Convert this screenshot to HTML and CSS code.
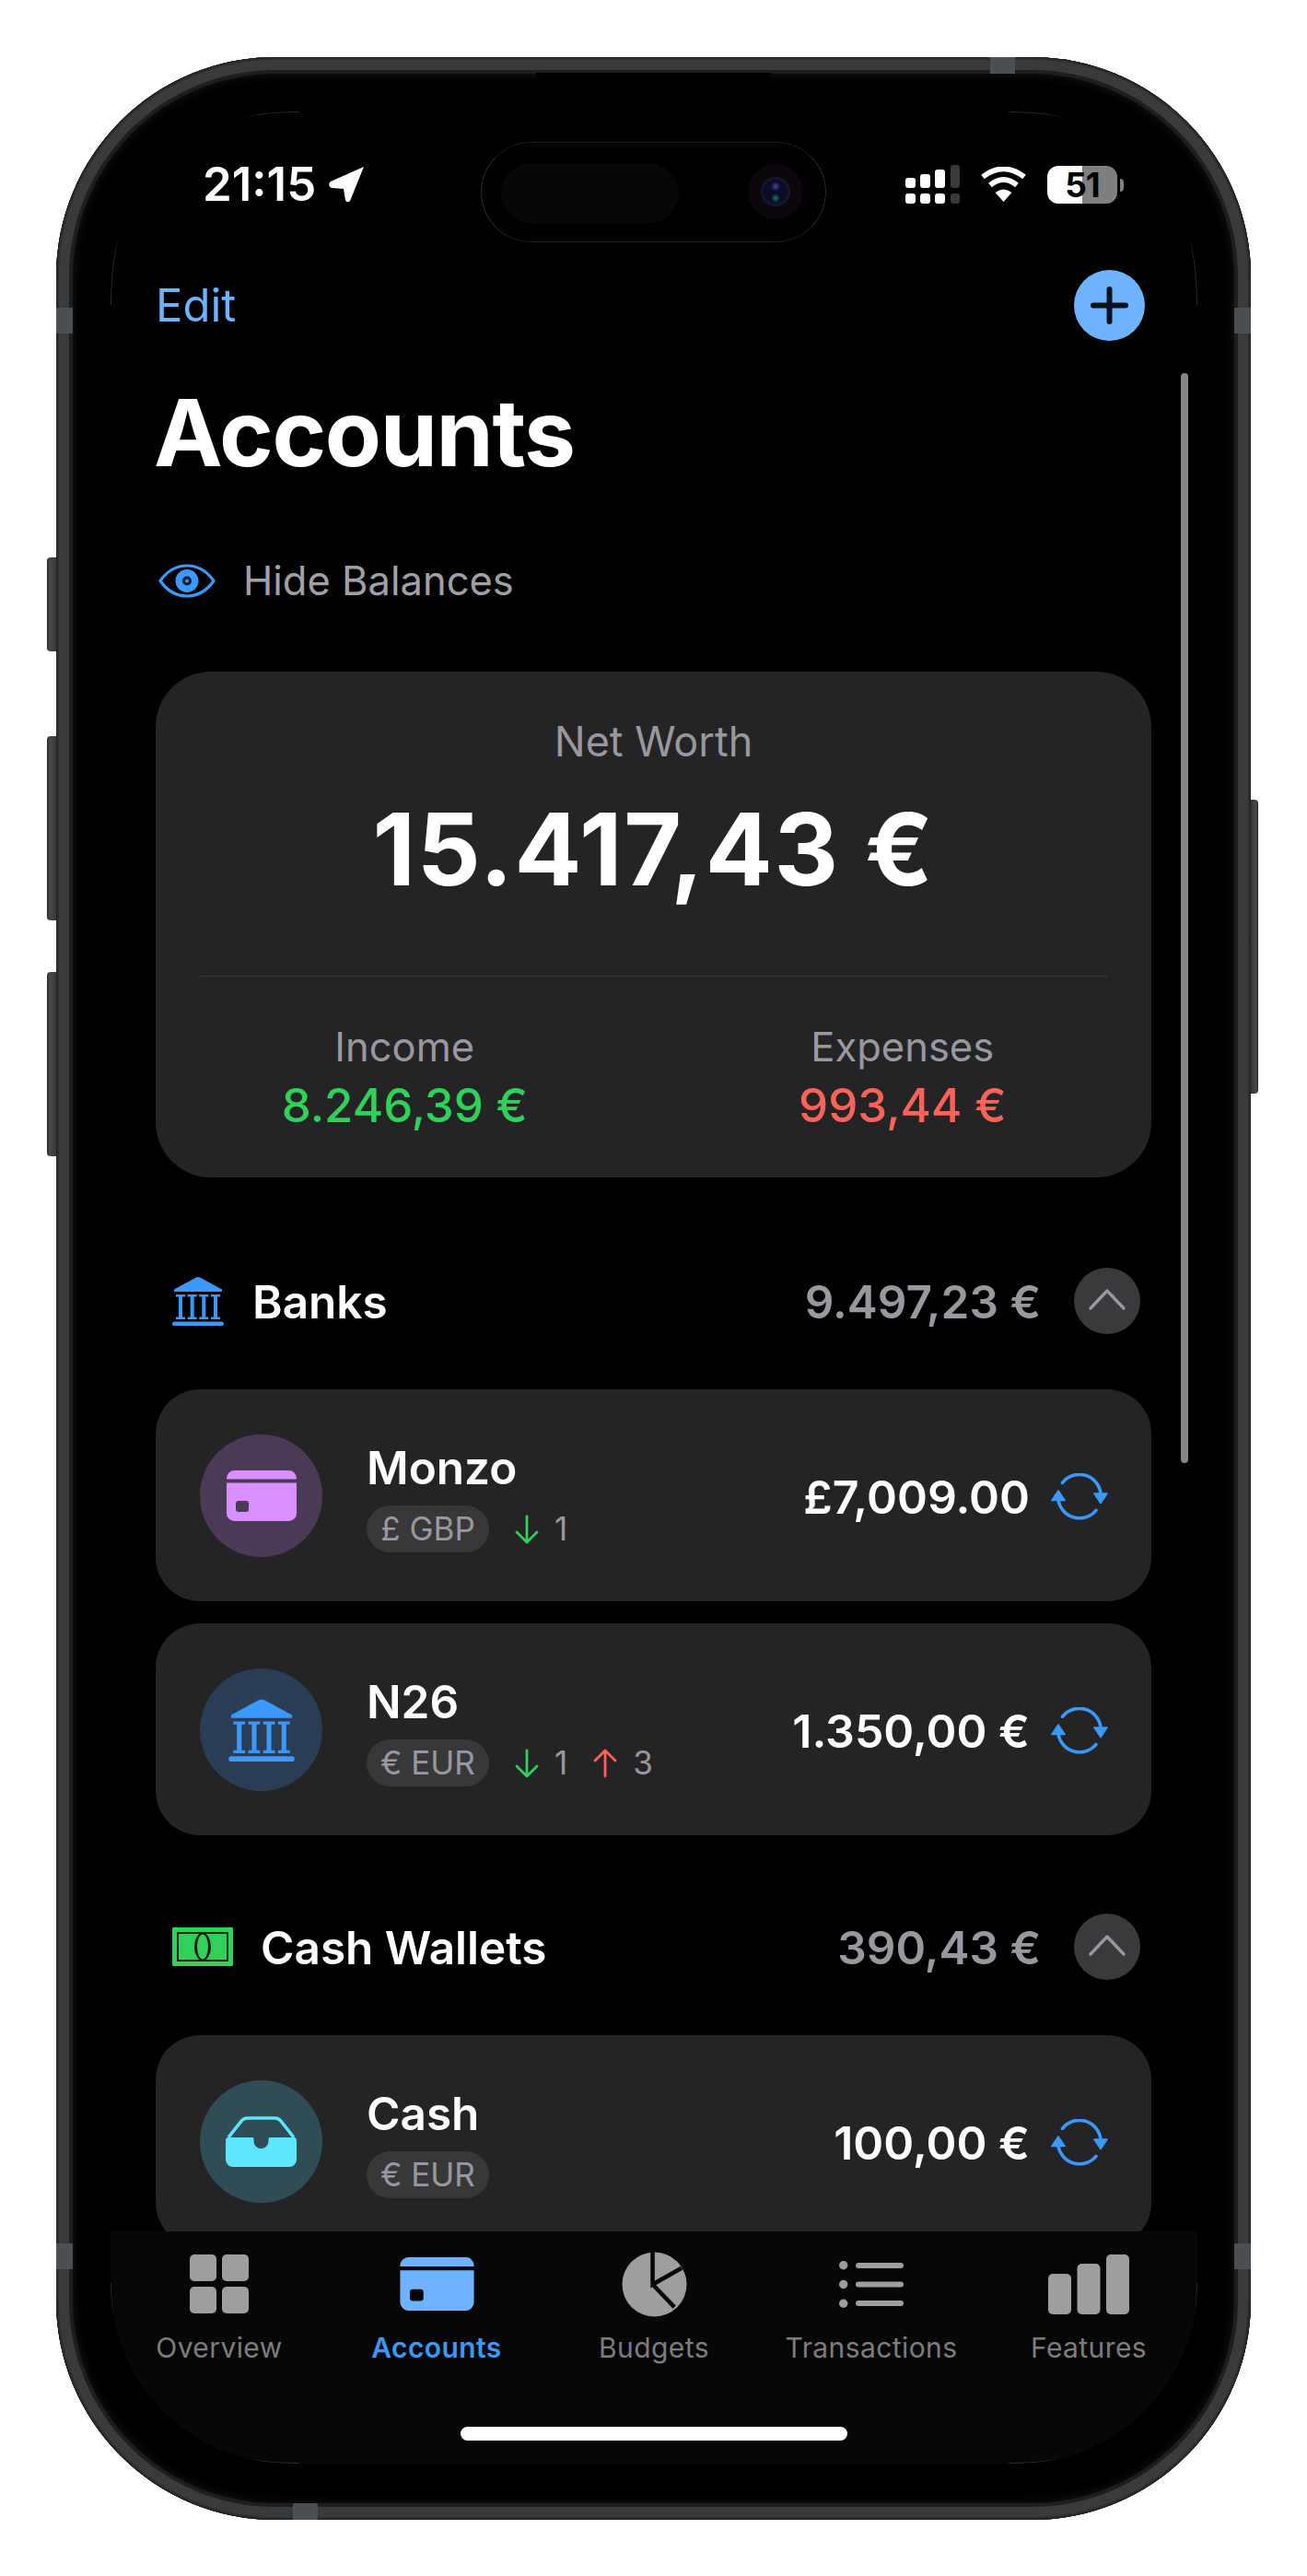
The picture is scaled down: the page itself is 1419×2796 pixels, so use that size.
FILE: index.html
```html
<!DOCTYPE html>
<html>

	<head>
		<meta charset="UTF-8">
		<title>Accounts</title>
		<link rel="stylesheet" href="styles.css">
	</head>

	<body>
		<svg class="defs" width="0" height="0">
			<symbol id="bank" viewBox="0 0 56 54">
				<path d="M2 17V14.5L26 1.6Q28 .6 30 1.6L54 14.5V17Z" />
				<path d="M4 20H14V22.5H11V44.5H14V47H4V44.5H7V22.5H4ZM16.7 20H26.7V22.5H23.7V44.5H26.7V47H16.7V44.5H19.7V22.5H16.7ZM29.3 20H39.3V22.5H36.3V44.5H39.3V47H29.3V44.5H32.3V22.5H29.3ZM42 20H52V22.5H49V44.5H52V47H42V44.5H45V22.5H42Z" />
				<rect x="0" y="49.5" width="56" height="4.5" rx="2.2" />
			</symbol>
			<symbol id="card" viewBox="0 0 76 55">
				<path d="M0 9.5V8.5A8.5 8.5 0 0 1 8.5 0H67.5A8.5 8.5 0 0 1 76 8.5V9.5Z" />
				<path fill-rule="evenodd" d="M0 13.5H76V46.5A8.5 8.5 0 0 1 67.5 55H8.5A8.5 8.5 0 0 1 0 46.5ZM13 33A3 3 0 0 0 10 36V42A3 3 0 0 0 13 45H21A3 3 0 0 0 24 42V36A3 3 0 0 0 21 33Z" />
			</symbol>
			<symbol id="refresh" viewBox="11 8 62 52">
				<path d="M23.5 18.3A23.3 23.3 0 0 1 65 30M60 48.3A23.3 23.3 0 0 1 19 37" fill="none" stroke="#3b99fc" stroke-width="3.6" stroke-linecap="round" />
				<path d="M58 30H72L65 40.5ZM12 37.5H26L19 27Z" fill="#3b99fc" stroke="#3b99fc" stroke-width="1.6" stroke-linejoin="round" />
			</symbol>
			<symbol id="chevron" viewBox="0 0 42 26">
				<path d="M3 23L21 4L39 23" fill="none" stroke="#98989e" stroke-width="3.4" stroke-linecap="round" stroke-linejoin="round" />
			</symbol>
			<symbol id="arrow-down" viewBox="0 0 26 32">
				<path d="M13 2V30M2 19L13 30L24 19" fill="none" stroke="#30d158" stroke-width="2.8" stroke-linecap="round" stroke-linejoin="round" />
			</symbol>
			<symbol id="arrow-up" viewBox="0 0 26 32">
				<path d="M13 30V2M2 13L13 2L24 13" fill="none" stroke="#ff6259" stroke-width="2.8" stroke-linecap="round" stroke-linejoin="round" />
			</symbol>
		</svg>

		<div class="phone">
			<span class="side-btn btn-action"></span>
			<span class="side-btn btn-vol-up"></span>
			<span class="side-btn btn-vol-down"></span>
			<span class="side-btn btn-power"></span>
			<span class="band band-top"></span>
			<span class="band band-bottom"></span>
			<span class="band band-left-a"></span>
			<span class="band band-left-b"></span>
			<span class="band band-right-a"></span>
			<span class="band band-right-b"></span>
			<span class="speaker"></span>

			<div class="screen">
				<div class="island">
					<span class="island-blob"></span>
					<span class="camera"><span class="lens"></span></span>
				</div>

				<div class="statusbar">
					<div class="status-left">
						<span class="time">21:15</span>
						<svg class="locate" viewBox="0 0 40 40"><path d="M38 1L2 17C-1 19 0 24 4 24L16 25L18 37C19 40 22 40 23.5 37Z" fill="#fff" /></svg>
					</div>
					<div class="status-right">
						<svg class="signal" viewBox="0 0 59 42">
							<g fill="#fff">
								<rect x="0" y="14" width="11" height="11" rx="3" />
								<rect x="16" y="10" width="11" height="15" rx="3" />
								<rect x="32" y="5" width="11" height="20" rx="3" />
								<rect x="0" y="31" width="11" height="11" rx="3" />
								<rect x="16" y="31" width="11" height="11" rx="3" />
								<rect x="32" y="31" width="11" height="11" rx="3" />
							</g>
							<g fill="#3a3a3a">
								<rect x="49" y="0" width="10" height="25" rx="3" />
								<rect x="49" y="31" width="10" height="11" rx="3" />
							</g>
						</svg>
						<svg class="wifi" viewBox="0 0 51 38">
							<g fill="none" stroke="#fff" stroke-width="5.6">
								<path d="M3 11Q25.5 -6.5 48 11" />
								<path d="M11 20Q25.5 8 40 20" />
							</g>
							<path d="M25.5 38L16.5 28Q25.5 21 34.5 28Z" fill="#fff" />
						</svg>
						<span class="battery">51</span>
					</div>
				</div>

				<div class="content">
					<div class="nav">
						<span class="edit">Edit</span>
						<svg class="plus" viewBox="0 0 77 77">
							<circle cx="38.5" cy="38.5" r="38.5" fill="#6db3ff" />
							<path d="M21 38.5H56M38.5 21V56" stroke="#08111c" stroke-width="6" stroke-linecap="round" />
						</svg>
					</div>

					<h1 class="title">Accounts</h1>

					<div class="hide-row">
						<svg class="eye" viewBox="0 0 62 37">
							<path d="M2 18.5C10 7 20 2 31 2C42 2 52 7 60 18.5C52 30 42 35 31 35C20 35 10 30 2 18.5Z" fill="none" stroke="#3b99fc" stroke-width="3.2" />
							<circle cx="31" cy="18.5" r="12.5" fill="#3b99fc" />
							<circle cx="31" cy="18.5" r="5" fill="#061a33" />
							<circle cx="31" cy="18.5" r="2" fill="#3b99fc" />
						</svg>
						<span>Hide Balances</span>
					</div>

					<section class="worth">
						<div class="worth-label">Net Worth</div>
						<div class="worth-value">15.417,43 €</div>
						<div class="divider"></div>
						<div class="totals">
							<div>
								<div class="totals-label">Income</div>
								<div class="totals-value green">8.246,39 €</div>
							</div>
							<div>
								<div class="totals-label">Expenses</div>
								<div class="totals-value red">993,44 €</div>
							</div>
						</div>
					</section>

					<div class="group-head">
						<svg class="group-icon bank-head"><use href="#bank" /></svg>
						<span class="group-name">Banks</span>
						<span class="group-sum">9.497,23 €</span>
						<span class="collapse"><svg><use href="#chevron" /></svg></span>
					</div>

					<div class="account">
						<span class="avatar avatar-purple"><svg class="ico-card"><use href="#card" /></svg></span>
						<div class="account-info">
							<div class="account-name">Monzo</div>
							<div class="account-meta">
								<span class="pill">£ GBP</span>
								<span class="count"><svg><use href="#arrow-down" /></svg>1</span>
							</div>
						</div>
						<span class="account-amount">£7,009.00</span>
						<svg class="sync"><use href="#refresh" /></svg>
					</div>

					<div class="account">
						<span class="avatar avatar-blue"><svg class="ico-bank"><use href="#bank" /></svg></span>
						<div class="account-info">
							<div class="account-name">N26</div>
							<div class="account-meta">
								<span class="pill">€ EUR</span>
								<span class="count"><svg><use href="#arrow-down" /></svg>1</span>
								<span class="count"><svg><use href="#arrow-up" /></svg>3</span>
							</div>
						</div>
						<span class="account-amount">1.350,00 €</span>
						<svg class="sync"><use href="#refresh" /></svg>
					</div>

					<div class="group-head group-cash">
						<svg class="group-icon cash-head" viewBox="0 0 66 42">
							<rect width="66" height="42" rx="1.5" fill="#30d158" />
							<rect x="6" y="6" width="54" height="30" fill="none" stroke="#04140a" stroke-width="1.8" />
							<ellipse cx="33" cy="21" rx="9" ry="15" fill="#04140a" />
							<ellipse cx="33" cy="21" rx="6" ry="13.5" fill="#30d158" />
						</svg>
						<span class="group-name">Cash Wallets</span>
						<span class="group-sum">390,43 €</span>
						<span class="collapse"><svg><use href="#chevron" /></svg></span>
					</div>

					<div class="account">
						<span class="avatar avatar-cyan">
							<svg class="ico-tray" viewBox="0 0 77 55">
								<path d="M3 23L16 6.5Q19 2 24 2H53Q58 2 61 6.5L74 23" fill="none" stroke="#5ce6ff" stroke-width="3.6" />
								<path d="M0 26A3 3 0 0 1 3 23H29Q30.5 23 30.5 25V27A8 8 0 0 0 46.5 27V25Q46.5 23 48 23H74A3 3 0 0 1 77 26V47A8 8 0 0 1 69 55H8A8 8 0 0 1 0 47Z" fill="#5ce6ff" />
							</svg>
						</span>
						<div class="account-info">
							<div class="account-name">Cash</div>
							<div class="account-meta">
								<span class="pill">€ EUR</span>
							</div>
						</div>
						<span class="account-amount">100,00 €</span>
						<svg class="sync"><use href="#refresh" /></svg>
					</div>
				</div>

				<div class="scrollbar"></div>

				<nav class="tabbar">
					<div class="tab">
						<span class="tab-icon">
							<svg class="tab-grid" viewBox="0 0 64 64">
								<rect width="29" height="29" rx="5" />
								<rect x="35" width="29" height="29" rx="5" />
								<rect y="35" width="29" height="29" rx="5" />
								<rect x="35" y="35" width="29" height="29" rx="5" />
							</svg>
						</span>
						<span class="tab-label">Overview</span>
					</div>
					<div class="tab tab-active">
						<span class="tab-icon"><svg class="tab-card"><use href="#card" /></svg></span>
						<span class="tab-label">Accounts</span>
					</div>
					<div class="tab">
						<span class="tab-icon">
							<svg class="tab-pie" viewBox="0 0 72 72">
								<circle cx="36" cy="36" r="35.5" />
								<path d="M34 -1V36L66 18M34 36L58 61" fill="none" stroke="#070708" stroke-width="4.6" />
							</svg>
						</span>
						<span class="tab-label">Budgets</span>
					</div>
					<div class="tab">
						<span class="tab-icon">
							<svg class="tab-list" viewBox="0 0 70 51">
								<circle cx="4.7" cy="4.7" r="4.7" />
								<circle cx="4.7" cy="25.5" r="4.7" />
								<circle cx="4.7" cy="46.3" r="4.7" />
								<rect x="18" y="2" width="52" height="6" rx="3" />
								<rect x="18" y="22.5" width="52" height="6" rx="3" />
								<rect x="18" y="43" width="52" height="6" rx="3" />
							</svg>
						</span>
						<span class="tab-label">Transactions</span>
					</div>
					<div class="tab">
						<span class="tab-icon">
							<svg class="tab-bars" viewBox="0 0 88 65">
								<rect y="21" width="25" height="44" rx="5" />
								<rect x="31.5" y="10" width="25" height="55" rx="5" />
								<rect x="63" width="25" height="65" rx="5" />
							</svg>
						</span>
						<span class="tab-label">Features</span>
					</div>
					<span class="home-bar"></span>
				</nav>

				<svg class="screen-edge" viewBox="0 0 1180 2553">
					<path d="M.5 210C.5 70 70 .5 205 .5M975 .5C1110 .5 1179.5 70 1179.5 210M1179.5 2357C1179.5 2490 1110 2552.5 975 2552.5M205 2552.5C70 2552.5 .5 2490 .5 2357" fill="none" stroke="#333" stroke-width=".8" />
				</svg>
			</div>
		</div>
	</body>

</html>
```

FILE: styles.css
```css
html,
body {
	margin: 0;
	width: 100%;
	height: 100%;
	background: #fff;
	overflow: hidden;
}

body {
	padding: 62px 0 0 61px;
	box-sizing: border-box;
	font-family: Inter, "Liberation Sans", sans-serif;
	color: #fff;
}

.defs {
	position: absolute;
}

svg {
	display: block;
}

/* phone body */

.phone {
	position: relative;
	width: 1297px;
	height: 2673px;
	box-sizing: border-box;
	padding: 59px 58px 61px 59px;
	border-radius: 238px;
	background: #000;
	box-shadow:
		inset 0 0 0 1px #202122,
		inset 0 0 0 3px #2c2e30,
		inset 0 0 0 14px #383a3c,
		inset 0 0 0 18px #1c1e1f,
		inset 0 0 11px 18px #1a1a1a;
}

.side-btn {
	position: absolute;
	background: linear-gradient(to right, #252627, #47494a 30%, #353637);
}

.btn-action {
	left: -10px;
	top: 543px;
	width: 10px;
	height: 102px;
	border-radius: 4px 0 0 4px;
}

.btn-vol-up {
	left: -10px;
	top: 737px;
	width: 10px;
	height: 200px;
	border-radius: 4px 0 0 4px;
}

.btn-vol-down {
	left: -10px;
	top: 993px;
	width: 10px;
	height: 200px;
	border-radius: 4px 0 0 4px;
}

.btn-power {
	right: -8px;
	top: 806px;
	width: 8px;
	height: 319px;
	border-radius: 0 4px 4px 0;
	background: linear-gradient(to left, #252627, #47494a 30%, #353637);
}

.band {
	position: absolute;
	background: #4c5052;
}

.band-top {
	left: 1014px;
	top: 0;
	width: 27px;
	height: 18px;
}

.band-bottom {
	left: 257px;
	bottom: 0;
	width: 27px;
	height: 18px;
}

.band-left-a,
.band-left-b {
	left: 0;
	width: 18px;
	height: 28px;
}

.band-right-a,
.band-right-b {
	right: 0;
	width: 18px;
	height: 28px;
}

.band-left-a,
.band-right-a {
	top: 272px;
}

.band-left-b,
.band-right-b {
	top: 2373px;
}

.speaker {
	position: absolute;
	left: 521px;
	top: 17px;
	width: 255px;
	height: 7px;
	background: #000;
	border-radius: 0 0 8px 8px;
}

.screen {
	position: relative;
	width: 1180px;
	height: 2553px;
	border-radius: 195px;
	background: #000;
	overflow: hidden;
}

.screen-edge {
	position: absolute;
	left: 0;
	top: 0;
	width: 1180px;
	height: 2553px;
}

/* dynamic island */

.island {
	position: absolute;
	left: 402px;
	top: 33px;
	width: 375px;
	height: 109px;
	box-sizing: border-box;
	border: 1px solid #2a2a2a;
	border-radius: 55px;
	border-top-color: #1c1c1c;
	border-bottom-color: #1c1c1c;
}

.island-blob {
	position: absolute;
	left: 21px;
	top: 22px;
	width: 193px;
	height: 65px;
	border-radius: 33px;
	background: #070707;
}

.camera {
	position: absolute;
	left: 289px;
	top: 23px;
	width: 60px;
	height: 60px;
	border-radius: 50%;
	background: #0c070d;
	display: flex;
	align-items: center;
	justify-content: center;
}

.lens {
	width: 32px;
	height: 32px;
	border-radius: 50%;
	background:
		radial-gradient(circle at 50% 32%, #4b4aa0 0, transparent 5px),
		radial-gradient(circle at 50% 72%, #1c7a66 0, transparent 5px),
		radial-gradient(circle, #0a0c28 50%, #171a30 70%);
}

/* status bar */

.statusbar {
	height: 141px;
	box-sizing: border-box;
	padding: 58px 87px 0 100px;
	display: flex;
	justify-content: space-between;
	align-items: flex-start;
}

.status-left {
	display: flex;
	align-items: center;
	gap: 14px;
}

.time {
	font-size: 51px;
	font-weight: 600;
	line-height: 42px;
}

.locate {
	width: 40px;
	height: 40px;
}

.status-right {
	display: flex;
	align-items: center;
	gap: 22px;
}

.signal {
	width: 59px;
	height: 42px;
}

.wifi {
	width: 51px;
	height: 38px;
}

.battery {
	position: relative;
	width: 76px;
	height: 41px;
	border-radius: 12px;
	background: linear-gradient(to right, #fff 50%, #7f7f7f 50%);
	color: #000;
	font-size: 37px;
	font-weight: 700;
	line-height: 41px;
	text-align: center;
	letter-spacing: -1px;
}

.battery::after {
	content: "";
	position: absolute;
	right: -7px;
	top: 14px;
	width: 4px;
	height: 14px;
	border-radius: 0 6px 6px 0;
	background: #7f7f7f;
}

/* page content */

.content {
	padding: 31px 50px 0 49px;
}

.nav {
	height: 77px;
	padding: 0 7px 0 0;
	display: flex;
	justify-content: space-between;
	align-items: center;
}

.edit {
	font-size: 49px;
	line-height: 77px;
	color: #6db3ff;
}

.plus {
	width: 77px;
	height: 77px;
}

.title {
	margin: 50px 0 0 -2px;
	font-size: 100px;
	font-weight: 700;
	line-height: 100px;
	letter-spacing: -1.4px;
}

.hide-row {
	margin: 90px 0 0 3px;
	height: 40px;
	display: flex;
	align-items: center;
	gap: 30px;
	font-size: 43.5px;
	line-height: 40px;
	color: #a0a0a6;
}

.eye {
	width: 62px;
	height: 37px;
}

/* net worth card */

.worth {
	margin-top: 79px;
	height: 549px;
	box-sizing: border-box;
	padding-top: 51px;
	border-radius: 60px;
	background: #242426;
	text-align: center;
}

.worth-label {
	font-size: 45px;
	line-height: 50px;
	color: #98989e;
}

.worth-value {
	margin-top: 32px;
	font-size: 108px;
	font-weight: 700;
	line-height: 120px;
	letter-spacing: 1.6px;
}

.divider {
	margin: 77px 48px 0;
	height: 1px;
	background: #3a3a3c;
}

.totals {
	margin-top: 51px;
	display: grid;
	grid-template-columns: 1fr 1fr;
}

.totals-label {
	font-size: 43.5px;
	line-height: 50px;
	color: #98989e;
}

.totals-value {
	margin-top: 14px;
	font-size: 51px;
	font-weight: 500;
	line-height: 50px;
}

.green {
	color: #30d158;
}

.red {
	color: #ff6259;
}

/* account groups */

.group-head {
	margin-top: 98px;
	height: 72px;
	padding: 0 12px 0 18px;
	display: flex;
	align-items: center;
}

.group-cash {
	margin-top: 85px;
}

.group-icon {
	fill: #3b99fc;
}

.bank-head {
	width: 56px;
	height: 54px;
	margin-right: 31px;
}

.cash-head {
	width: 66px;
	height: 42px;
	margin-right: 30px;
}

.group-name {
	flex: 1;
	font-size: 49.5px;
	font-weight: 600;
	line-height: 72px;
	padding-top: 1px;
}

.group-sum {
	font-size: 49.5px;
	font-weight: 600;
	line-height: 72px;
	color: #98989e;
	padding-top: 1px;
}

.collapse {
	margin-left: 36px;
	width: 72px;
	height: 72px;
	border-radius: 50%;
	background: #3a3a3c;
	display: flex;
	align-items: center;
	justify-content: center;
}

.collapse svg {
	width: 42px;
	height: 26px;
	margin-top: -4px;
}

.account {
	margin-top: 24px;
	height: 230px;
	padding: 0 47px 0 48px;
	border-radius: 48px;
	background: #242426;
	display: flex;
	align-items: center;
}

.group-head + .account {
	margin-top: 60px;
}

.avatar {
	flex: none;
	width: 133px;
	height: 133px;
	border-radius: 50%;
	display: flex;
	align-items: center;
	justify-content: center;
}

.avatar-purple {
	background: #4a3a55;
	fill: #d98fff;
}

.avatar-blue {
	background: #2a3d55;
	fill: #3b99fc;
}

.avatar-cyan {
	background: #304c55;
}

.ico-card {
	width: 76px;
	height: 55px;
}

.ico-bank {
	width: 72px;
	height: 69px;
}

.ico-tray {
	width: 77px;
	height: 55px;
}

.account-info {
	flex: 1;
	margin-left: 48px;
}

.account-name {
	font-size: 49.5px;
	font-weight: 600;
	line-height: 60px;
	padding-top: 2px;
}

.account-meta {
	margin-top: 11px;
	display: flex;
	align-items: center;
	gap: 28px;
	font-size: 35px;
	color: #98989e;
}

.pill {
	width: 133px;
	height: 51px;
	border-radius: 26px;
	background: #38383a;
	text-align: center;
	line-height: 51px;
}

.count {
	display: flex;
	align-items: center;
	gap: 17px;
	line-height: 51px;
}

.count svg {
	width: 26px;
	height: 32px;
}

.account-amount {
	margin-top: 3px;
	font-size: 50px;
	font-weight: 600;
	line-height: 60px;
}

.sync {
	flex: none;
	margin: 3px 0 0 23px;
	width: 62px;
	height: 52px;
}

.scrollbar {
	position: absolute;
	left: 1162px;
	top: 284px;
	width: 8px;
	height: 1183px;
	border-radius: 4px;
	background: #868686;
}

/* tab bar */

.tabbar {
	position: absolute;
	left: 0;
	right: 0;
	bottom: 0;
	height: 252px;
	box-sizing: border-box;
	padding-top: 22px;
	background: #070708;
	display: grid;
	grid-template-columns: repeat(5, 1fr);
	align-items: start;
}

.tab {
	display: flex;
	flex-direction: column;
	align-items: center;
	color: #7d7d7d;
	fill: #9e9e9e;
}

.tab-active {
	color: #3b99fc;
	fill: #6db3ff;
	font-weight: 600;
}

.tab-icon {
	height: 70px;
	display: flex;
	align-items: center;
	justify-content: center;
}

.tab-label {
	margin-top: 14px;
	font-size: 30px;
	line-height: 40px;
	letter-spacing: .4px;
}

.tab-grid {
	width: 64px;
	height: 64px;
}

.tab-card {
	width: 81px;
	height: 58px;
}

.tab-pie {
	width: 71px;
	height: 71px;
}

.tab-list {
	width: 70px;
	height: 51px;
}

.tab-bars {
	width: 88px;
	height: 65px;
}

.home-bar {
	position: absolute;
	left: 380px;
	top: 212px;
	width: 420px;
	height: 15px;
	border-radius: 8px;
	background: #fff;
}
```
